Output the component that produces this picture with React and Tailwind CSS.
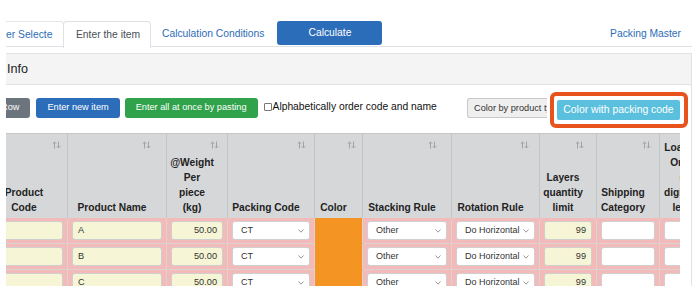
import React from "react";

const cols = [
  { w: "w-[77px]", head: ["Product", "Code"], icon: "right-[6px]" },
  { w: "w-[99px]", head: ["Product Name"], icon: "right-[15px]" },
  { w: "w-[61px]", head: ["@Weight", "Per", "piece", "(kg)"], icon: "right-[8px]" },
  { w: "w-[87px]", head: ["Packing Code"], icon: "right-[8px]" },
  { w: "w-[48px]", head: ["Color"], icon: "right-[6px]" },
  { w: "w-[89px]", head: ["Stacking Rule"], icon: "right-[14px]" },
  { w: "w-[88px]", head: ["Rotation Rule"], icon: "right-[10px]" },
  { w: "w-[57px]", head: ["Layers", "quantity", "limit"], icon: "right-[12px]" },
  { w: "w-[63px]", head: ["Shipping", "Category"], icon: "right-[8px]" },
  { w: "w-[59px]", head: ["Loading", "Order", "(2", "digits or", "less)"], icon: "right-[8px]" },
];

const rows = [
  { name: "A", weight: "50.00", pack: "CT", stack: "Other", rot: "Do Horizontal", layers: "99" },
  { name: "B", weight: "50.00", pack: "CT", stack: "Other", rot: "Do Horizontal", layers: "99" },
  { name: "C", weight: "50.00", pack: "CT", stack: "Other", rot: "Do Horizontal", layers: "99" },
];

const SortIcon = () => (
  <svg width="9" height="8" viewBox="0 0 9 8">
    <path d="M2.5 7.5V1M0.7 2.8L2.5 1L4.3 2.8M6.5 0.5V7M4.7 5.2L6.5 7L8.3 5.2" fill="none" stroke="#a3a3a3" strokeWidth="1" />
  </svg>
);

function Field({ value, right, white }) {
  return (
    <div
      className={`h-[19px] w-full overflow-hidden whitespace-nowrap rounded-[3px] border border-[#cfcfcf] px-[5px] text-[9.2px] leading-[17px] text-[#333] ${
        white ? "bg-white" : "bg-[#f6f6d6]"
      } ${right ? "text-right" : ""}`}
    >
      {value}
    </div>
  );
}

function Select({ value }) {
  return (
    <div className="flex h-[19px] w-full items-center justify-between rounded-[3px] border border-[#cfcfcf] bg-white pl-[8px] pr-[5px] text-[9px] text-[#333]">
      <span className="whitespace-nowrap">{value}</span>
      <svg width="6" height="4" viewBox="0 0 6 4" className="shrink-0">
        <path d="M0.5 0.5L3 3.2L5.5 0.5" fill="none" stroke="#8a8a8a" strokeWidth="0.9" />
      </svg>
    </div>
  );
}

function Cell({ w, children, orange }) {
  return (
    <div
      className={`${w} flex h-[26px] shrink-0 items-center border-b border-r px-[4px] ${
        orange ? "border-b-[#f39423] border-r-[#dcd2d2] bg-[#f39423]" : "border-[#dcd2d2] bg-[#f3baba]"
      }`}
    >
      {children}
    </div>
  );
}

export default function App() {
  return (
    <div className="relative h-[286px] w-[700px] overflow-hidden bg-white font-['Liberation_Sans',Arial,sans-serif]">
      <div className="ml-[6px] w-[686px] overflow-hidden pt-[21px]">
        {/* tabs */}
        <div className="flex h-[26px] border-b border-[#dee2e6]">
          <div className="flex h-[26px] w-[58px] items-center whitespace-nowrap rounded-tr-[4px] border-r border-t border-[#e3e6ea] text-[10.3px] text-[#2c6db8]">
            er Selecte
          </div>
          <div className="-ml-px flex h-[27px] w-[88px] items-center rounded-t-[4px] border border-b-0 border-[#dee2e6] bg-white pl-[12px] text-[10.3px] text-[#495057]">
            Enter the item
          </div>
          <div className="flex items-center px-[11px] text-[10.3px] text-[#2c6db8]">Calculation Conditions</div>
          <button className="ml-[2px] h-[24px] w-[105px] rounded-[3px] bg-[#2c6db9] text-[10.3px] text-white">
            Calculate
          </button>
          <div className="ml-auto flex items-center pr-[11px] text-[10.3px] text-[#2c6db8]">Packing Master</div>
        </div>

        {/* panel */}
        <div className="mt-[6px] border-r border-t border-[#e2e2e2]">
          <div className="flex h-[31px] items-center border-b border-[#e2e2e2] bg-[#f4f4f4] pl-[1px] text-[12.6px] text-[#222]">
            Info
          </div>
          <div className="pr-[11px] pt-[13px]">
            <div className="flex h-[22px] items-start">
              <button className="-ml-[15px] h-[20px] rounded-[3px] bg-[#6c757d] pl-[10px] pr-[11px] text-[9.2px] text-white">
                Row
              </button>
              <button className="ml-[6px] h-[20px] rounded-[3px] bg-[#2c6db9] px-[11px] text-[9.2px] text-white">
                Enter new item
              </button>
              <button className="ml-[5px] h-[20px] rounded-[3px] bg-[#2fa24b] px-[11px] text-[9.2px] text-white">
                Enter all at once by pasting
              </button>
              <span className="ml-[6px] mt-[5px] h-[8px] w-[8px] rounded-[1px] border border-[#777] bg-white" />
              <span className="ml-[1px] whitespace-nowrap pt-[3px] text-[10.3px] leading-[12px] text-[#111]">
                Alphabetically order code and name
              </span>
              <div className="ml-auto h-[20px] w-[80px] overflow-hidden whitespace-nowrap rounded-l-[3px] border-b border-l border-t border-[#c8c8c8] bg-[#efefef] pl-[6px] text-[9.2px] leading-[18px] text-[#333]">
                Color by product type
              </div>
              <button className="ml-[10px] mt-[2px] h-[20px] w-[123px] rounded-[2px] bg-[#5bc0de] text-[10.4px] text-white">
                Color with packing code
              </button>
            </div>

            {/* table */}
            <div className="mt-[13px] w-[674px] overflow-hidden">
              <div className="-ml-[15px] w-max">
                <div className="flex border-t border-[#c6c7c9]">
                  {cols.map((c, i) => (
                    <div
                      key={i}
                      className={`${c.w} relative flex h-[84px] shrink-0 flex-col items-center justify-end border-r border-[#c3c4c6] bg-[#d6d7d9] pb-[3px] pl-[4px] pr-[14px] text-center text-[10.2px] font-bold leading-[15px] text-[#222]`}
                    >
                      <span className={`absolute top-[7px] ${c.icon}`}>
                        <SortIcon />
                      </span>
                      {c.head.map((l, j) => (
                        <div key={j} className="whitespace-nowrap">
                          {l}
                        </div>
                      ))}
                    </div>
                  ))}
                </div>
                {rows.map((r, i) => (
                  <div key={i} className="flex">
                    <Cell w="w-[77px]">
                      <Field value="" />
                    </Cell>
                    <Cell w="w-[99px]">
                      <Field value={r.name} />
                    </Cell>
                    <Cell w="w-[61px]">
                      <Field value={r.weight} right />
                    </Cell>
                    <Cell w="w-[87px]">
                      <Select value={r.pack} />
                    </Cell>
                    <Cell w="w-[48px]" orange />
                    <Cell w="w-[89px]">
                      <Select value={r.stack} />
                    </Cell>
                    <Cell w="w-[88px]">
                      <Select value={r.rot} />
                    </Cell>
                    <Cell w="w-[57px]">
                      <Field value={r.layers} right />
                    </Cell>
                    <Cell w="w-[63px]">
                      <Field value="" white />
                    </Cell>
                    <Cell w="w-[59px]">
                      <Field value="" white />
                    </Cell>
                  </div>
                ))}
              </div>
            </div>
          </div>
        </div>
      </div>

      {/* highlight annotation */}
      <div className="pointer-events-none absolute left-[550px] top-[92px] h-[36px] w-[138px] rounded-[6px] border-[4px] border-[#e8531d]" />
    </div>
  );
}
